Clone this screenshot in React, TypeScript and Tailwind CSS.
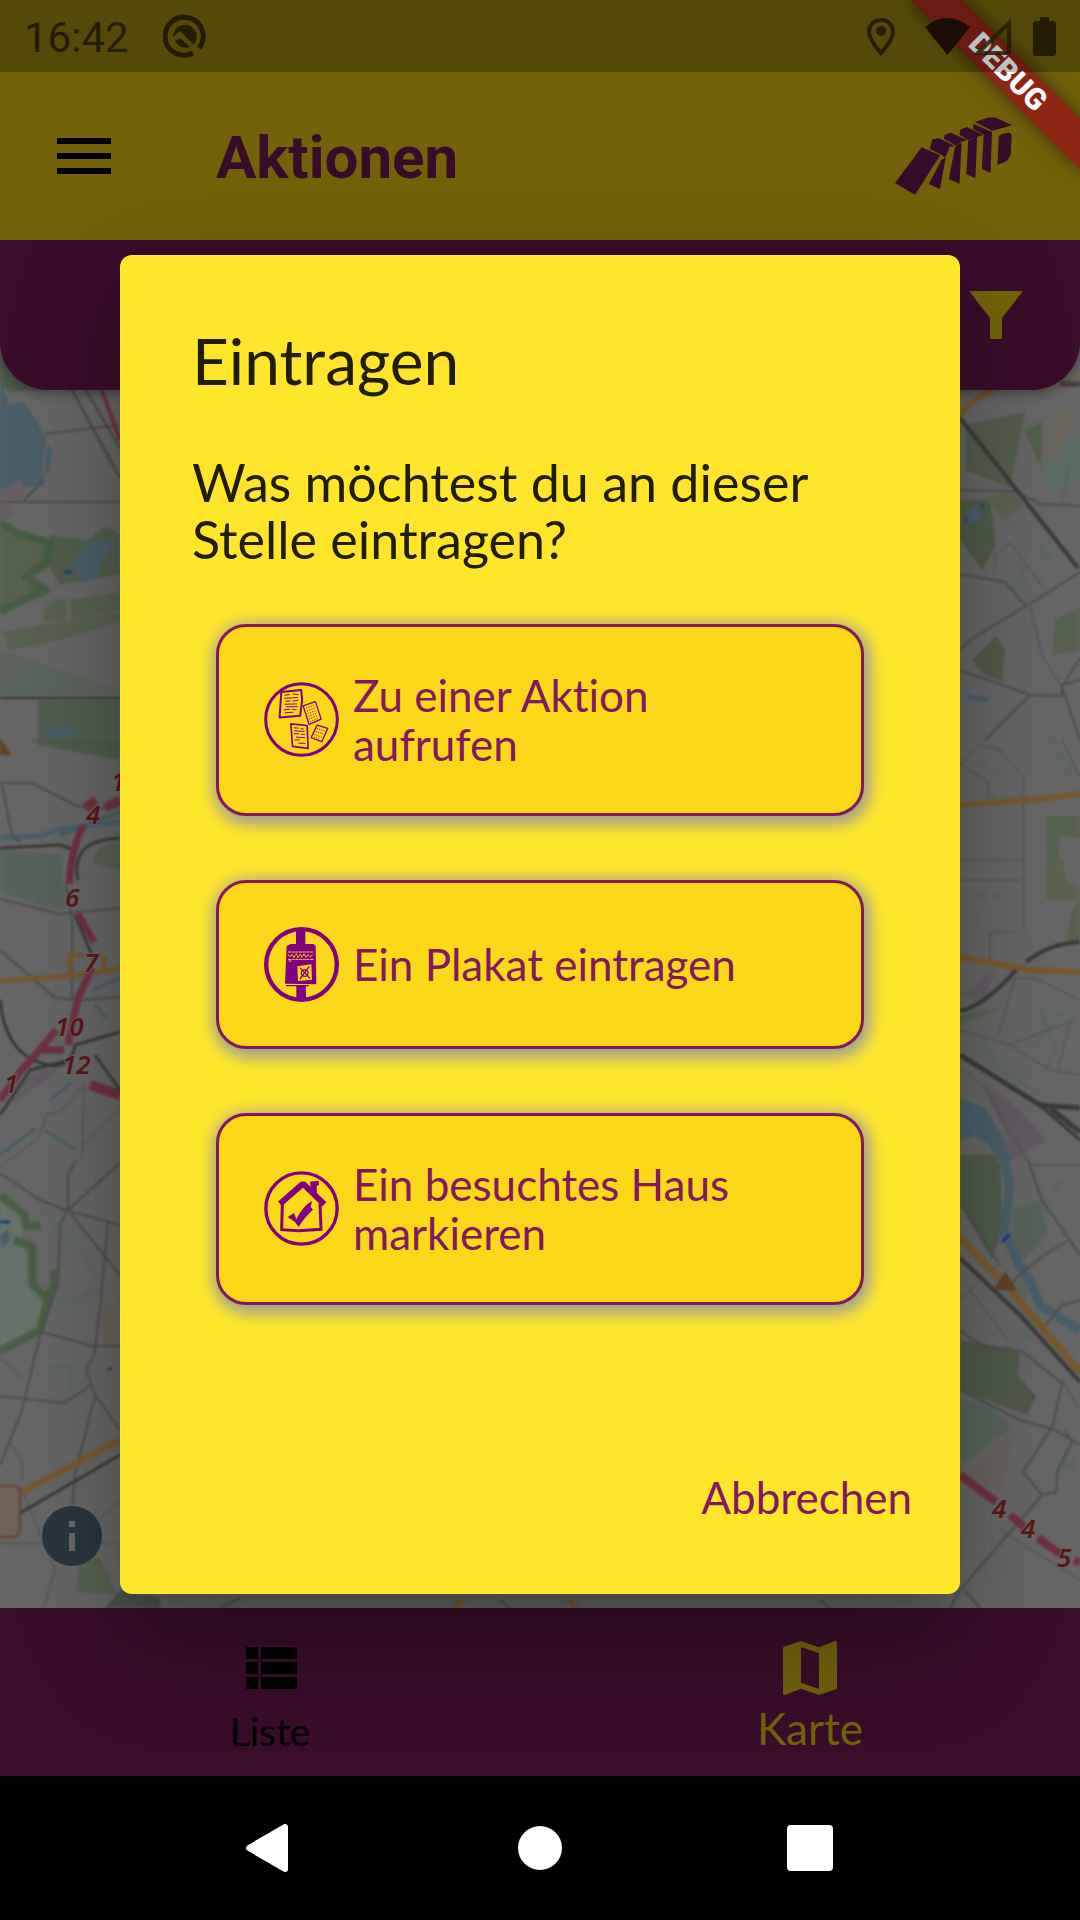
import type { ReactNode } from "react";

function MapCanvas() {
  return (
    <svg
      className="absolute inset-0 h-full w-full"
      viewBox="0 240 1080 1368"
      preserveAspectRatio="xMidYMin slice"
      aria-hidden="true"
    >
      <rect x="0" y="240" width="1080" height="1368" fill="#676767" />

      <g className="blur-[1px]">
      {/* parks and meadows */}
      <g fill="#56624f" opacity=".9">
        <path d="M0 330 25 360 46 390 10 392 0 384Z" fill="#4c5a48" />
        <path d="M0 524 52 540 48 570 24 578 46 590 0 612Z" />
        <path d="M50 535 88 540 106 526 120 535V574L60 585 48 565Z" fill="#505d4a" />
        <path d="M44 612C48 600 60 600 66 598V620L44 622ZM70 600 120 592V610L72 620ZM2 632 120 612V622L60 640 10 650Z" />
        <path d="M0 650 120 690V700H0Z" fill="#5c665d" />
        <path d="M38 700H120V760L75 752 38 745Z" fill="#505e4d" />
        <path d="M28 740H120V760Z" fill="#4c5b4a" />
        <path d="M0 850 60 855 65 910 40 905 0 892Z" fill="#57645a" />
        <path d="M100 848 120 840V870L92 862Z" />
        <path d="M0 1195 24 1215 22 1240 32 1280 45 1298 38 1330 0 1350Z" fill="#67736a" />
        <path d="M80 1560 100 1558 118 1595 76 1592Z" />
        <path d="M105 1608 120 1590 160 1598V1608Z" fill="#47534a" />
        <path d="M965 425 1025 412 1010 488 965 470Z" fill="#515d4c" />
        <path d="M960 500H990L996 545 982 570 960 540Z" fill="#4d5945" />
        <path d="M985 498 1012 490 1024 505 1004 520Z" fill="#5d624d" />
        <path d="M1024 430 1042 422 1040 465Z" fill="#50604d" />
        <path d="M1045 465 1080 432V480L1048 488Z" fill="#5d7063" />
        <path d="M1055 620 1080 608V650L1052 655Z" />
        <path d="M972 660 996 636 1005 650 1002 682 985 675Z" fill="#4d5945" />
        <path d="M1046 816H1080V838L1060 835 1058 860 1048 862Z" />
        <path d="M1047 860H1063L1066 882 1080 890V900H1046Z" fill="#59644f" />
        <path d="M1072 910 1080 900V940H1066Z" />
        <path d="M960 1015 1000 1008 960 1025Z" />
        <path d="M960 1160 975 1155 1000 1163 1002 1230 992 1260 960 1205Z" fill="#4c5a47" />
        <path d="M1013 1210 1040 1200 1048 1232 1025 1260 1012 1250Z" fill="#57645a" />
        <path d="M960 1340 1020 1350 1018 1375 1035 1395 1028 1415 960 1390Z" fill="#4d5947" />
        <path d="M960 1400 990 1405 1012 1428 962 1465Z" fill="#57645a" />
        <path d="M960 1155 1000 1155 985 1182 962 1175Z" fill="#4c5a47" />
      </g>
      <g fill="none" stroke="#58695c" strokeWidth="4" opacity=".75">
        <path d="M980 1040 1000 1070 1035 1090M1030 1048 1060 1015 1080 1010M1040 1010 1056 1048 1046 1070M1070 460 1060 510M1040 545 1058 570" />
        <path d="M42 1208 100 1278M56 1300 75 1300 95 1290 120 1300M45 1367H70V1394M60 825 70 850M1008 590 1024 580 1020 565M1000 500 1015 530" />
        <path d="M978 760 1000 775M985 800H1020M975 895H1000M970 920H990M1050 735 1070 775" strokeWidth="7" strokeDasharray="10 8" />
        <path d="M1022 1285 1028 1340M1060 1180 1040 1220M1062 1465H1080" strokeWidth="8" strokeDasharray="14 9" />
      </g>

      {/* water */}
      <g fill="#4a5f68">
        <path d="M0 380 8 398 6 405 24 402 36 420 46 440 42 470 44 485 24 487 0 490Z" />
        <path d="M47 443 52 450 50 470 44 478Z" />
        <path d="M72 565 80 550 92 540 106 542 120 545 106 554 96 578 82 582Z" />
        <path d="M42 730 56 725 78 728 76 735 60 738 45 735Z" />
        <path d="M960 1098 985 1108 1005 1140 1012 1160H1000L985 1142 975 1136 960 1140Z" />
        <path d="M967 508 980 505 982 520 968 524ZM966 694 992 698 985 702 968 700Z" />
        <path d="M0 1235 8 1230 10 1240 2 1248Z" />
      </g>
      <g fill="none" stroke="#4a5f68">
        <path d="M0 838 40 836 60 829 120 822M60 835 120 812" strokeWidth="5" />
        <path d="M1003 1155 1010 1185 1004 1232 1018 1262 1032 1285 1040 1305 1055 1315 1080 1330" strokeWidth="9" />
        <path d="M92 990 120 978M95 1004 106 1018M72 1082 50 1100M0 1155 36 1128M45 1130 76 1150" strokeWidth="3" />
        <path d="M64 572H72M0 1222H10M108 1369H112M981 506H984M965 520H968M1032 1397H1035" stroke="#144673" strokeWidth="3" />
        <path d="M1002 1242 1010 1234" stroke="#262a87" strokeWidth="3" />
      </g>

      {/* forest borders */}
      <g fill="none" stroke="#435c40" strokeWidth="8" strokeLinejoin="round" opacity=".8">
        <path d="M0 522 18 534 50 543 46 562 26 577 46 590 0 611" />
        <path d="M0 1196 24 1214 26 1226 40 1226M14 1240 32 1246 32 1284 46 1298 54 1286 54 1270M50 1290 40 1330 0 1351" />
      </g>
      <path d="M0 490 20 480 26 490 20 500H0M0 505 12 508 14 515 6 519 0 516Z" fill="#695f66" />
      <path d="M2 1110 30 1075 62 1065 44 1082Z" fill="#625c62" />
      <path d="M962 995 994 970 985 1005Z M980 1080 1020 1110 1046 1140 1012 1160 1004 1130Z" fill="#625c62" />
      <path d="M964 1475 1015 1428 1012 1445 1000 1490Z" fill="#68635f" />
      <path d="M100 1306 118 1302V1345L102 1342Z" fill="#68645c" />
      <path d="M1065 410 1050 455M1040 390 1080 375" stroke="#6b685f" strokeWidth="18" />

      {/* streets */}
      <g fill="none" stroke="#4d4d4d" strokeWidth="2">
        <path d="M0 502H120M45 434 120 425M24 500 44 480M0 783H32L75 805 95 810 120 806M2 785 12 835 20 842M0 899 60 914 120 908M66 885 72 920V1000M0 950 55 998 80 1000 120 997" />
        <path d="M0 1173 40 1200 66 1210 120 1225M120 1163 68 1210 60 1224 58 1284 40 1335 22 1410 0 1465M70 1213 120 1275M68 1210V1175L76 1160M108 1222 100 1310 94 1355 86 1370 95 1395 75 1475 70 1530M42 1332 92 1346H120M0 1396 64 1403 90 1386M96 1396 120 1430" />
        <path d="M0 1167 40 1137 46 1115 60 1112 84 1085M84 1085 82 1160M82 1145 120 1110M0 1357 22 1378M8 1440 22 1460V1480M0 1543H120M20 1485 55 1570 44 1608M90 1530 120 1500" strokeWidth="1" />
        <path d="M960 490 1015 491 1040 504 1080 506M960 574 1005 582 1026 606 1080 572M1026 606 970 640 960 650M960 670 1030 695 1062 696V685L1080 680M1063 690 1080 740M985 740 1030 695M1064 684 1080 658" />
        <path d="M995 570V555L1010 543 1045 590M1030 606 1042 655 1060 685M960 764 980 745 1000 750 1023 777V930M960 860H1023M960 880H1020M960 764 988 782V798M990 960V932H1015M1062 740 1080 778" strokeWidth="1" />
        <path d="M960 1030 1010 1045 1050 1070 1080 1075M998 1035 1015 978 1035 978 1080 1000M1008 1045 1075 1020M962 1068 985 1090 1030 1165M1030 1165H1080M1058 1070 1070 1022" strokeWidth="1" />
        <path d="M1028 1160 1042 1200 1080 1255M1066 1242Q1030 1262 1010 1285M960 1203 1000 1265M960 1330Q985 1352 1010 1348M1080 1300 1062 1305 1046 1325M1020 1350 1062 1383 1053 1425 1023 1472 1042 1495 1056 1492 1058 1470 1072 1442 1065 1430M960 1390 1020 1420 1055 1430 1080 1445M1042 1495 960 1590 950 1608M964 1590 980 1608" />
        <path d="M1062 1380 1080 1410M970 1290 1008 1340M960 1300 980 1280M1000 1530 1080 1580" strokeWidth="1" />
        <path d="M220 1608 240 1598M500 1600 510 1608M820 1600 830 1608" />
      </g>

      {/* trunk roads */}
      <g fill="none" stroke="#79592f" strokeWidth="6">
        <path d="M0 981 70 976 120 969M70 975V955H84M104 970V955" strokeWidth="5" />
        <path d="M20 1493 60 1472 120 1440" />
        <path d="M960 415Q970 400 995 390" />
        <path d="M960 805 1040 799 1080 794M960 957 1030 970 1080 972" />
        <path d="M960 1238 1010 1290 1080 1372" strokeWidth="7" />
        <path d="M455 1608 462 1598M575 1608 570 1598" />
      </g>

      {/* railways */}
      <g fill="none" stroke="#393939" strokeWidth="4">
        <path d="M0 698H120" strokeWidth="2" />
        <path d="M0 848 60 845 75 850M120 838Q90 840 82 852T78 880M75 915 94 960M0 1000Q5 1050 38 1062T75 1045L120 1032M95 1055 120 1090M0 1115 30 1070 70 1060" strokeWidth="3" />
        <path d="M72 390 120 478M86 390 120 448" strokeWidth="2" stroke="#454545" />
        <path d="M960 418 1078 568" />
        <path d="M960 1010H965Q990 1000 1016 970M1026 962Q1050 943 1080 942" />
        <path d="M960 1055 1040 1105M1038 1105 1080 1108M1050 1108 1080 1132" strokeWidth="5" />
        <path d="M1040 1105 1080 1140" strokeWidth="3" />
        <path d="M960 1258 1020 1315 1080 1382" />
        <path d="M20 1513 120 1455" strokeWidth="3" />
      </g>

      {/* motorway */}
      <g fill="none" stroke="#702f40" strokeWidth="7">
        <path d="M102 390 120 440" strokeWidth="4" />
        <path d="M120 800 105 808M85 808 96 800" strokeWidth="9" />
        <path d="M84 825Q72 845 69 884M78 914 94 942M92 968 78 998 68 1045M56 1030 38 1052 20 1072 0 1100M38 1050H64" />
        <path d="M90 1085 120 1095" strokeWidth="10" />
        <path d="M960 1475 996 1502M1010 1515 1025 1528M1038 1538 1060 1554M1074 1560 1080 1563" strokeWidth="8" />
      </g>
      <path d="M1060 384H1080" stroke="#50404f" strokeWidth="6" />
      <path d="M0 738 12 755H0Z" fill="#5f4026" />
      <path d="M1005 1271 1017 1290H994Z" fill="#5f4026" />
      <rect x="-20" y="1486" width="40" height="51" rx="7" fill="#706259" stroke="#644337" strokeWidth="2" />
      </g>

      <g
        fontFamily="'Noto Sans', sans-serif"
        fontStyle="italic"
        fontWeight="600"
        fontSize="26"
        fill="#591818"
        stroke="#6b6262"
        strokeWidth="2"
        paintOrder="stroke"
      >
        <text x="111" y="791">1</text>
        <text x="86" y="824">4</text>
        <text x="65" y="907">6</text>
        <text x="84" y="972">7</text>
        <text x="55" y="1036">10</text>
        <text x="62" y="1074">12</text>
        <text x="4" y="1093">1</text>
        <text x="992" y="1518">4</text>
        <text x="1021" y="1538">4</text>
        <text x="1057" y="1567">5</text>
      </g>
    </svg>
  );
}

function BrandLogo() {
  return (
    <svg className="h-[78px] w-[118px]" viewBox="1030 346 342 234" preserveAspectRatio="none" fill="#370b2a" aria-hidden="true">
      <path d="M1107 437 1161 461 1088 579 1030 544Z" />
      <path d="M1131 442 1138 413 1158 410 1204 433 1189 435 1176 468 1166 460Z" />
      <path d="M1166 472 1177 468 1160 562 1128 547Z" />
      <path d="M1172 412 1174 400 1192 393 1240 416 1222 420 1208 432Z" />
      <path d="M1204 436 1223 422 1217 546 1186 532Z" />
      <path d="M1217 399 1219 384 1238 376 1286 400 1268 405 1242 416Z" />
      <path d="M1242 418 1268 404 1263 530 1237 518Z" />
      <path d="M1257 383V366L1311 391V402L1288 399Z" />
      <path d="M1287 398 1311 390 1307 514 1282 502Z" />
      <path d="M1262 361 1298 348Q1310 345 1322 348L1370 371 1312 387Z" />
      <path d="M1331 402Q1345 393 1360 393 1368 395 1368 405L1366 455Q1362 482 1327 489Z" />
    </svg>
  );
}

function LeafletsIcon() {
  return (
    <svg className="size-[75px] shrink-0" viewBox="72 68 226 226" fill="none" stroke="#800080" aria-hidden="true">
      <circle cx="185" cy="181" r="108" strokeWidth="9" />
      <g strokeWidth="5" strokeLinejoin="round">
        <path d="M124 98 184 92 187 122 181 170 119 175Z" strokeWidth="6" />
        <path d="M190 140 227 127 244 180 208 196Z" strokeWidth="4" />
        <path d="M153 194 202 199 205 268 158 262Z" />
        <path d="M232 198 264 208 246 248 214 236Z" strokeWidth="4" />
      </g>
      <g strokeWidth="3">
        <path d="M134 108 150 106M158 104 176 106M133 117 174 115M136 126 152 125M158 126 175 123M134 135 172 134M138 143 173 142M132 152 150 150M156 150 170 152M134 161 160 159" />
        <path d="M162 206 176 207M182 208 192 210M163 215 194 217M162 224 178 224M184 226 195 226M168 234 196 236M164 243 180 242M176 252 197 253" />
        <path d="M200 147 224 138M202 155 227 146M204 163 229 154M206 171 232 162M208 179 234 170M211 187 236 178M232 208 254 215M228 217 250 224M224 226 246 234M222 234 240 240" strokeDasharray="3 4" />
      </g>
    </svg>
  );
}

function PosterIcon() {
  return (
    <svg className="size-[75px] shrink-0" viewBox="0 0 225 225" aria-hidden="true">
      <circle cx="112.500" cy="112.500" r="106" fill="none" stroke="#800080" strokeWidth="13" />
      <path d="M96 4H124V52H96ZM97 174H126V222H97Z" fill="#800080" />
      <path d="M68 57 80 51H148L155 57 157 172 63 170Z" fill="#800080" />
      <path d="M94 52H126M66 176H134" stroke="#800080" strokeWidth="4" />
      <path
        d="M72 75H148M72 82 78 90 84 81 90 92 96 80 102 92 108 81 114 91 120 80 126 92 132 82 138 90 148 82M72 97H150M74 102H82"
        fill="none"
        stroke="#fdd818"
        strokeWidth="3"
        strokeDasharray="9 2"
      />
      <path d="M100 118 142 112 144 158 102 162Z" fill="#fdd818" />
      <path d="M108 122 138 154M136 118 108 156M112 138A10 10 0 1 0 132 138 10 10 0 1 0 112 138" fill="none" stroke="#800080" strokeWidth="4" />
    </svg>
  );
}

function HouseIcon() {
  return (
    <svg className="size-[75px] shrink-0" viewBox="0 0 225 225" aria-hidden="true">
      <circle cx="112.500" cy="112.500" r="107" fill="none" stroke="#800080" strokeWidth="10" />
      <path d="M48 98 117 38 181 100" fill="none" stroke="#800080" strokeWidth="18" strokeLinejoin="bevel" />
      <path d="M138 32 164 29 165 42 158 44 159 78 142 62Z" fill="#800080" />
      <path d="M55 98 53 176 104 179 171 175 168 98" fill="none" stroke="#800080" strokeWidth="9" />
      <path d="M71 138 90 126 97 144Q118 104 144 90L140 108 147 116Q120 140 104 168L92 152Z" fill="#800080" />
    </svg>
  );
}

function ActionCard({ icon, children }: { icon: ReactNode; children: ReactNode }) {
  return (
    <button
      type="button"
      className="flex w-full items-center gap-[14px] rounded-[30px] border-[3px] border-[#82195f] bg-[#fdd818] py-11 pr-16 pl-[45px] text-left text-[44px] leading-[49px] text-[#82195f] shadow-[2px_4px_16px_4px_#9a9a9a]"
    >
      {icon}
      <span>{children}</span>
    </button>
  );
}

function StatusBar() {
  return (
    <div className="relative z-20 flex h-[72px] items-center justify-between bg-black/25 pr-6 pl-6 text-[#241d03]">
      <div className="flex items-center gap-[34px]">
        <span className="pt-1 font-[Roboto,sans-serif] text-[42px] leading-[48px]">16:42</span>
        <svg className="size-[44px]" viewBox="0 0 44 44" fill="none" stroke="currentColor" aria-hidden="true">
          <path d="M36 34A19 19 0 1 0 30 39" strokeWidth="5" />
          <path d="M10 23A12 12 0 0 1 33 18Q35 26 31 31L17 17Z" fill="currentColor" stroke="none" />
          <path d="M12 27 17 24 27 33Q18 36 12 27Z" fill="currentColor" stroke="none" />
        </svg>
      </div>
      <svg className="h-[40px] w-[190px]" viewBox="866 15 190 40" aria-hidden="true">
        <path d="M881 19C873 19 869 25 869 31 869 39 877 47 881 52 885 47 893 39 893 31 893 25 889 19 881 19Z" fill="none" stroke="currentColor" strokeWidth="4" />
        <circle cx="881" cy="30" r="5" fill="currentColor" />
        <path d="M925 26Q947 8 970 26L947.500 54Z" fill="#1b0d03" />
        <path d="M1009 22V52H978Z" fill="none" stroke="#241d03" strokeOpacity=".85" strokeWidth="4" />
        <path d="M1040 16H1049V20H1053Q1056 20 1056 23V52Q1056 55 1053 55H1036Q1033 55 1033 52V23Q1033 20 1036 20H1040Z" fill="currentColor" />
      </svg>
    </div>
  );
}

export default function App() {
  return (
    <div className="relative flex min-h-screen flex-col overflow-hidden bg-black font-[Lato,sans-serif] [font-variant-ligatures:none]">
      <header className="relative z-10 bg-[#73620a]">
        <div className="pointer-events-none absolute top-0 right-0 z-10 size-[260px] overflow-hidden">
          <div className="absolute top-[54px] -right-12 flex h-9 w-60 rotate-45 items-center justify-center bg-[#8c2614] font-[Roboto,sans-serif] text-[30px] leading-9 font-black text-white shadow-[0_0_20px_rgba(0,0,0,0.5)]">
            DEBUG
          </div>
        </div>
        <StatusBar />
        <div className="flex h-[168px] items-center pr-[67px] pl-12">
          <button type="button" aria-label="Menü" className="mr-24">
            <svg className="size-[72px]" viewBox="0 0 24 24" aria-hidden="true">
              <path d="M3 18h18v-2H3v2zm0-5h18v-2H3v2zm0-7v2h18V6H3z" />
            </svg>
          </button>
          <h1 className="flex-1 pt-1 font-[Roboto,sans-serif] text-[60px] leading-[72px] font-bold text-[#390c29]">Aktionen</h1>
          <BrandLogo />
        </div>
      </header>

      <main className="relative flex-1">
        <MapCanvas />
        <div className="relative flex h-[150px] items-start justify-end rounded-b-[48px] bg-[#3b0d2b] pt-[39px] pr-12 shadow-[0_3px_12px_rgba(0,0,0,0.4)]">
          <button type="button" aria-label="Filter">
            <svg className="size-[72px]" viewBox="0 0 24 24" fill="#75640a" aria-hidden="true">
              <path d="M3 4H21L14 13V20H10V13Z" />
            </svg>
          </button>
        </div>
        <button type="button" aria-label="Information" className="absolute bottom-[42px] left-[42px]">
          <svg className="size-[60px]" viewBox="0 0 60 60" aria-hidden="true">
            <circle cx="30" cy="30" r="30" fill="#2a363e" />
            <path d="M27 15h6v6h-6zM27 27h6v18h-6z" fill="#686868" />
          </svg>
        </button>
      </main>

      <nav className="grid h-[168px] grid-cols-2 bg-[#3b0d2b]">
        <a href="#liste" className="flex flex-col items-center pt-6 text-[39px] leading-[48px] text-black">
          <svg className="mb-[3px] size-[72px]" viewBox="0 0 24 24" aria-hidden="true">
            <path d="M4 14h4v-4H4v4zm0 5h4v-4H4v4zM4 9h4V5H4v4zm5 5h12v-4H9v4zm0 5h12v-4H9v4zM9 5v4h12V5H9z" />
          </svg>
          Liste
        </a>
        <a href="#karte" className="flex flex-col items-center pt-6 text-[44px] leading-[49px] text-[#73620a]">
          <svg className="size-[72px]" viewBox="0 0 24 24" fill="#73620a" aria-hidden="true">
            <path d="M20.5 3l-.16.03L15 5.1 9 3 3.36 4.9c-.21.07-.36.25-.36.48V20.5c0 .28.22.5.5.5l.16-.03L9 18.900l6 2.100 5.640-1.900c.21-.07.36-.25.36-.48V3.500c0-.28-.22-.5-.5-.5zM15 19l-6-2.110V5l6 2.110V19z" />
          </svg>
          Karte
        </a>
      </nav>

      <div className="flex h-[144px] items-center justify-center gap-[198px] bg-black">
        <button type="button" aria-label="Zurück">
          <svg className="size-[72px]" viewBox="0 0 72 72" fill="white" stroke="white" strokeWidth="6" strokeLinejoin="round" aria-hidden="true">
            <path d="M15 36 51 15V57Z" />
          </svg>
        </button>
        <button type="button" aria-label="Startbildschirm">
          <svg className="size-[72px]" viewBox="0 0 72 72" fill="white" aria-hidden="true">
            <circle cx="36" cy="36" r="22" />
          </svg>
        </button>
        <button type="button" aria-label="Übersicht">
          <svg className="size-[72px]" viewBox="0 0 72 72" fill="white" aria-hidden="true">
            <rect x="13" y="13" width="46" height="46" rx="4" />
          </svg>
        </button>
      </div>

      <div className="absolute inset-0 z-10 flex items-center px-[120px] pt-[72px] pb-[144px]">
        <section
          role="dialog"
          aria-modal="true"
          aria-labelledby="entry-title"
          className="flex w-full flex-col rounded-xl bg-[#ffe62b] pt-[70px] pb-[72px] text-[#211d05] shadow-[0_33px_45px_-21px_rgba(0,0,0,0.2),0_72px_90px_9px_rgba(0,0,0,0.12),0_27px_110px_20px_rgba(0,0,0,0.1)]"
        >
          <h2 id="entry-title" className="px-[72px] text-[64px] leading-[72px]">
            Eintragen
          </h2>
          <p className="px-[72px] pt-[57px] text-[52px] leading-[57px]">
            Was möchtest du an dieser
            <br />
            Stelle eintragen?
          </p>
          <div className="flex flex-col gap-16 px-24 pt-14">
            <ActionCard icon={<LeafletsIcon />}>
              Zu einer Aktion
              <br />
              aufrufen
            </ActionCard>
            <ActionCard icon={<PosterIcon />}>Ein Plakat eintragen</ActionCard>
            <ActionCard icon={<HouseIcon />}>
              Ein besuchtes Haus
              <br />
              markieren
            </ActionCard>
          </div>
          <button type="button" className="mt-[168px] mr-12 self-end text-[44px] leading-[49px] text-[#82195f]">
            Abbrechen
          </button>
        </section>
      </div>
    </div>
  );
}
